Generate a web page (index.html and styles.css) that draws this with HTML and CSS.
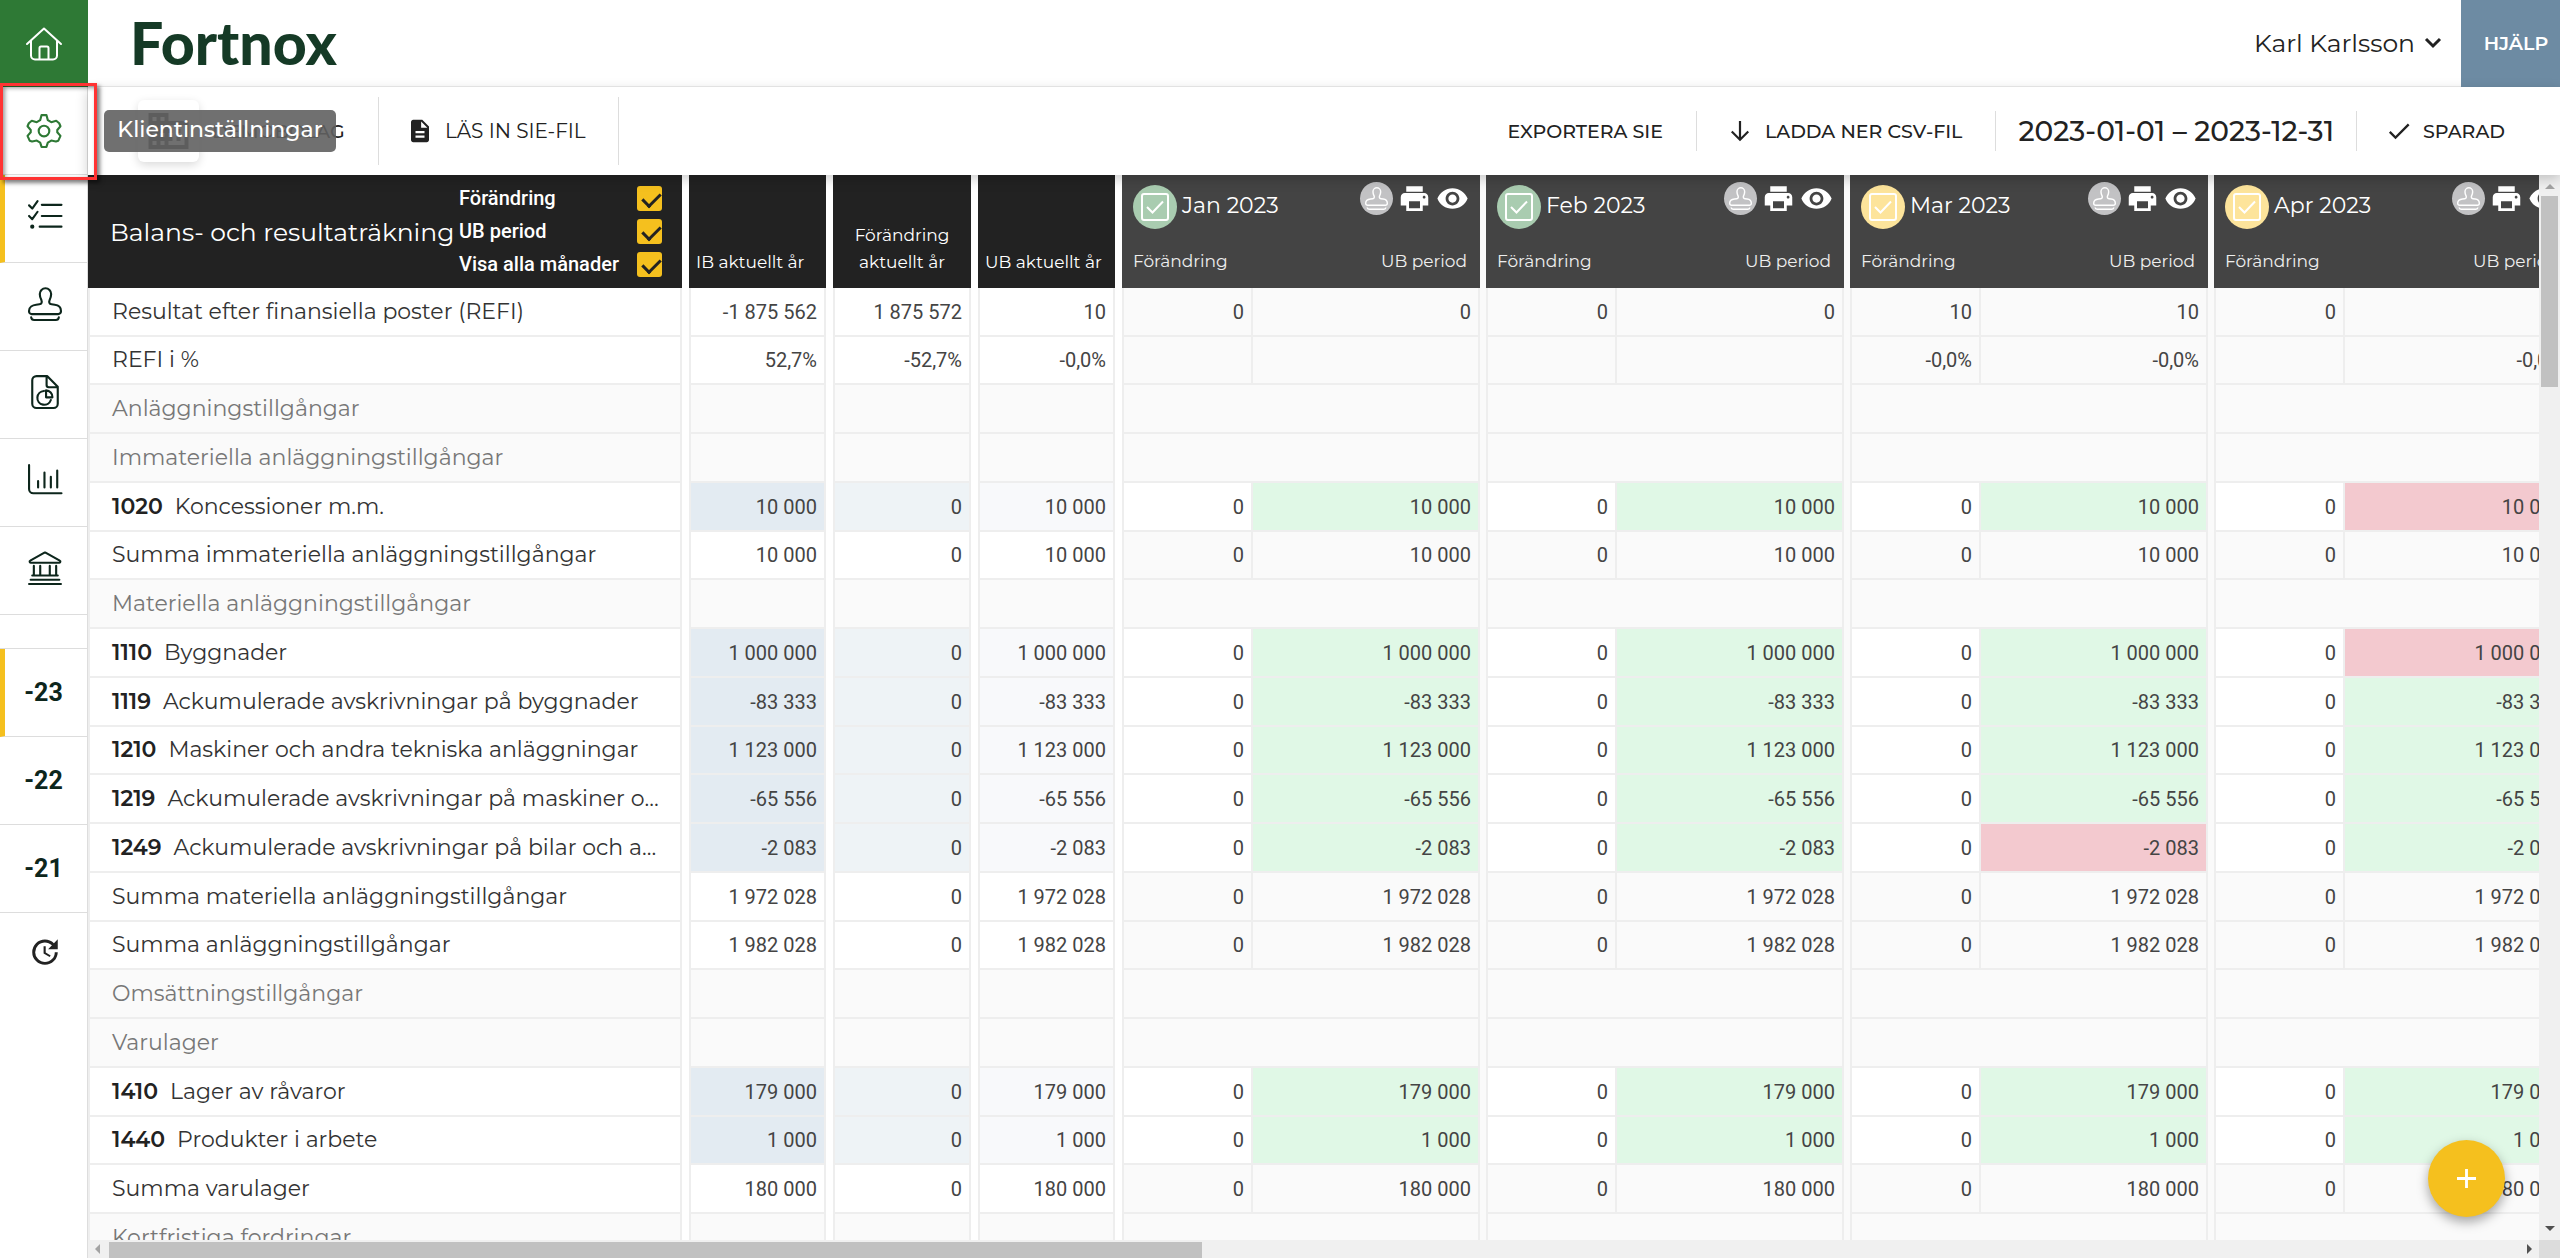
FILE: index.html
```html
<!DOCTYPE html>
<html lang="sv">
<head>
<meta charset="utf-8">
<title>Fortnox – Balans- och resultaträkning</title>
<link rel="stylesheet" href="styles.css">
</head>
<body>
<svg class="sprite" aria-hidden="true">
  <symbol id="i-stamp" viewBox="0 0 32 32">
    <path d="M3.500 25.500h25a2.500 2.500 0 0 0 2.500-2.500v-.6c0-3.200-2.400-5.300-5.800-5.700l-3-.4c-2.200-.3-2.700-2-1.900-4 .7-1.600 1.500-3.300 1.500-5.800a5.300 5.300 0 0 0-10.700 0c0 2.500.7 4.200 1.500 5.800.8 2 .3 3.700-1.900 4l-3 .4C4.200 17.100 1 19.200 1 22.400v.6a2.500 2.500 0 0 0 2.500 2.500z"/>
    <path d="M3 28.500c.2 1.700 1.200 2.500 2.800 2.500h20.400c1.600 0 2.600-.8 2.800-2.500"/>
  </symbol>
  <symbol id="i-check" viewBox="0 0 24 24"><path d="M9 16.200 4.800 12l-1.400 1.400L9 19 21 7l-1.400-1.400z"/></symbol>
  <symbol id="i-print" viewBox="0 0 24 24"><path d="M19 8H5c-1.700 0-3 1.300-3 3v6h4v4h12v-4h4v-6c0-1.700-1.300-3-3-3zm-3 11H8v-5h8v5zm3-7c-.6 0-1-.4-1-1s.4-1 1-1 1 .4 1 1-.4 1-1 1zm-1-9H6v4h12V3z"/></symbol>
  <symbol id="i-eye" viewBox="0 0 24 24"><path d="M12 4.500C7 4.500 2.700 7.600 1 12c1.700 4.400 6 7.500 11 7.500s9.300-3.100 11-7.500c-1.700-4.400-6-7.500-11-7.500zM12 17c-2.800 0-5-2.200-5-5s2.200-5 5-5 5 2.200 5 5-2.200 5-5 5zm0-8c-1.700 0-3 1.300-3 3s1.300 3 3 3 3-1.300 3-3-1.300-3-3-3z"/></symbol>
</svg>

<nav class="sidebar" aria-label="Huvudmeny">
  <a class="side-item side-home" href="#" aria-label="Hem">
    <svg class="line-icon home-icon" viewBox="0 0 36 34"><path d="M1 17 18 1.500 35 17M5 14v14.500a4 4 0 0 0 4 4h18a4 4 0 0 0 4-4V14M13.500 32V21a1.500 1.500 0 0 1 1.500-1.500h6a1.500 1.500 0 0 1 1.500 1.500v11"/></svg>
  </a>
  <a class="side-item side-settings" href="#" aria-label="Klientinställningar">
    <svg class="line-icon" viewBox="0 0 32 32"><circle cx="16" cy="16" r="5"/><path d="M13.700 1h4.600l1.300 4.800 3.200 1.900 4.700-1.400 2.800 2.400 1.200 2.800-3 3.500v2.200l3 3.400-2 4.500-2.300.8-4.400-.9-3.200 1.900-1.300 4.100h-4.600l-1.300-4.100-3.200-1.900-4.400.9-2.300-.8-2-4.500 3-3.400V15l-3-3.500L1.700 8.700l2.800-2.400 4.700 1.400 3.200-1.900z"/></svg>
  </a>
  <a class="side-item side-active" href="#" aria-label="Avstämning">
    <svg class="line-icon" viewBox="0 0 32 32"><path d="m1 6 3 3 5-7M13 5.500h18.500M1 16l3 3 5-7M13 16h18.500M11 26h20.500"/><circle cx="4" cy="26" r="1"/></svg>
  </a>
  <a class="side-item" href="#" aria-label="Signering"><svg class="line-icon"><use href="#i-stamp"/></svg></a>
  <a class="side-item" href="#" aria-label="Rapporter">
    <svg class="line-icon" viewBox="0 0 32 32"><path d="M18 1H8a4 4 0 0 0-4 4v22a4 4 0 0 0 4 4h16a4 4 0 0 0 4-4V11zM17.500 1.500V9.500a2 2 0 0 0 2 2H28M15 15a6.500 6.500 0 1 0 6.500 8.500M17 14.500v6.500h6a6.200 6.200 0 0 0-6-6.500z"/></svg>
  </a>
  <a class="side-item" href="#" aria-label="Analys">
    <svg class="line-icon" viewBox="0 0 32 32"><path d="M1 2v22.500a4 4 0 0 0 4 4h26.500M9.500 17v6M15.500 9v14M21.500 13v10M27.500 7v16"/></svg>
  </a>
  <a class="side-item" href="#" aria-label="Bank">
    <svg class="line-icon" viewBox="0 0 32 32"><path d="M2.500 11h27a1 1 0 0 0 .4-1.900L16.500 1.500h-1L2.100 9.100A1 1 0 0 0 2.500 11zM5.500 14v9M11.500 14v9M20.500 14v9M26.500 14v9M4 23h24M2.500 27h27M1 31h30"/></svg>
  </a>
  <div class="side-gap"></div>
  <a class="side-item side-year side-active" href="#">-23</a>
  <a class="side-item side-year" href="#">-22</a>
  <a class="side-item side-year" href="#">-21</a>
  <a class="side-item side-history" href="#" aria-label="Historik">
    <svg class="fill-icon" viewBox="0 0 24 24"><path d="M21 10.100h-6.800l2.700-2.800c-2.700-2.700-7.100-2.800-9.800-.1a6.900 6.900 0 0 0 0 9.800c2.700 2.700 7.100 2.700 9.800 0 1.400-1.300 2-3 2-4.900H21c0 2-.9 4.600-2.700 6.300a9 9 0 0 1-12.700 0 8.900 8.900 0 0 1 0-12.600 9 9 0 0 1 12.700 0L21 3v7.100zM12.500 8v4.300l3.500 2.100-.7 1.200L11 13V8h1.500z"/></svg>
  </a>
</nav>

<div class="main">
  <header class="topbar">
    <a class="logo" href="#">Fortnox</a>
    <button class="user" type="button">Karl Karlsson
      <svg class="chevron" viewBox="0 0 18 12"><path d="m2 2 7 7 7-7"/></svg>
    </button>
    <button class="help" type="button">HJÄLP</button>
  </header>

  <div class="toolbar">
    <button class="tool tool-company" type="button">
      <span class="company-chip"><svg class="company-icon" viewBox="0 0 20 18"><path d="M10 4V0H0v18h20V4H10zM4 16H2v-2h2v2zm0-4H2v-2h2v2zm0-4H2V6h2v2zm0-4H2V2h2v2zm4 12H6v-2h2v2zm0-4H6v-2h2v2zm0-4H6V6h2v2zm0-4H6V2h2v2zm10 12h-8v-2h2v-2h-2v-2h2V8h-2V6h8v10zm-2-8h-2v2h2V8zm0 4h-2v2h2v-2z"/></svg></span>
      DEMOBOLAG
    </button>
    <button class="tool tool-sie" type="button">
      <svg class="file-icon" viewBox="0 0 16 20"><path d="M10 0H2C.9 0 0 .9 0 2v16c0 1.100.9 2 2 2h12c1.100 0 2-.9 2-2V6l-6-6zm2 16H4v-2h8v2zm0-4H4v-2h8v2zM9 7V1.500L14.500 7H9z"/></svg>
      LÄS IN SIE-FIL
    </button>
    <div class="tools-right">
      <button class="tool-right" type="button">EXPORTERA SIE</button>
      <button class="tool-right" type="button">
        <svg class="arrow-icon" viewBox="0 0 18 20"><path d="M9 1v17M1.500 10.500 9 18l7.500-7.500"/></svg>
        LADDA NER CSV-FIL
      </button>
      <button class="tool-right tool-date" type="button">2023-01-01 – 2023-12-31</button>
      <span class="tool-right tool-saved"><svg class="saved-icon"><use href="#i-check"/></svg>SPARAD</span>
    </div>
  </div>

  <main class="viewport">
    <div class="sheet" id="sheet">
      <table class="grid grid-label">
        <thead><tr><th>
          <div class="title-head">
            <span class="title">Balans- och resultaträkning</span>
            <span class="options">
              <label class="option">Förändring<input type="checkbox" checked></label>
              <label class="option">UB period<input type="checkbox" checked></label>
              <label class="option">Visa alla månader<input type="checkbox" checked></label>
            </span>
          </div>
        </th></tr></thead>
        <tbody id="labels"></tbody>
      </table>
      <table class="grid grid-total">
        <thead><tr><th>IB aktuellt år</th></tr></thead>
        <tbody id="opening"></tbody>
      </table>
      <table class="grid grid-total grid-change">
        <thead><tr><th>Förändring aktuellt år</th></tr></thead>
        <tbody id="change"></tbody>
      </table>
      <table class="grid grid-total">
        <thead><tr><th>UB aktuellt år</th></tr></thead>
        <tbody id="closing"></tbody>
      </table>
      <div class="months" id="months"></div>
    </div>
    <div class="bar bar-y"><i class="tri tri-up"></i><span class="thumb thumb-y"></span><i class="tri tri-down"></i></div>
    <div class="bar bar-x"><i class="tri tri-left"></i><span class="thumb thumb-x"></span><i class="tri tri-right"></i></div>
    <div class="bar-corner"></div>
  </main>
</div>

<div class="marker"></div>
<div class="tooltip" role="tooltip">Klientinställningar</div>
<button class="fab" type="button" aria-label="Lägg till"><svg viewBox="0 0 20 20"><path d="M10 0v20M0 10h20"/></svg></button>
<script src="app.js"></script>
</body>
</html>
```
FILE: app.js
```js
// kind: s = section heading, t = total, a = account
const rows = [
  { kind: 't', name: 'Resultat efter finansiella poster (REFI)', ib: '-1 875 562', diff: '1 875 572', ub: '10',
    months: [['0', '0'], ['0', '0'], ['10', '10'], ['0', '10']] },
  { kind: 't', name: 'REFI i %', ib: '52,7%', diff: '-52,7%', ub: '-0,0%',
    months: [['', ''], ['', ''], ['-0,0%', '-0,0%'], ['', '-0,0%']] },
  { kind: 's', name: 'Anläggningstillgångar' },
  { kind: 's', name: 'Immateriella anläggningstillgångar' },
  { kind: 'a', no: '1020', name: 'Koncessioner m.m.', value: '10 000', off: [3] },
  { kind: 't', name: 'Summa immateriella anläggningstillgångar', value: '10 000' },
  { kind: 's', name: 'Materiella anläggningstillgångar' },
  { kind: 'a', no: '1110', name: 'Byggnader', value: '1 000 000', off: [3] },
  { kind: 'a', no: '1119', name: 'Ackumulerade avskrivningar på byggnader', value: '-83 333' },
  { kind: 'a', no: '1210', name: 'Maskiner och andra tekniska anläggningar', value: '1 123 000' },
  { kind: 'a', no: '1219', name: 'Ackumulerade avskrivningar på maskiner och andra tekniska anläggningar', value: '-65 556' },
  { kind: 'a', no: '1249', name: 'Ackumulerade avskrivningar på bilar och andra transportmedel', value: '-2 083', off: [2] },
  { kind: 't', name: 'Summa materiella anläggningstillgångar', value: '1 972 028' },
  { kind: 't', name: 'Summa anläggningstillgångar', value: '1 982 028' },
  { kind: 's', name: 'Omsättningstillgångar' },
  { kind: 's', name: 'Varulager' },
  { kind: 'a', no: '1410', name: 'Lager av råvaror', value: '179 000' },
  { kind: 'a', no: '1440', name: 'Produkter i arbete', value: '1 000' },
  { kind: 't', name: 'Summa varulager', value: '180 000' },
  { kind: 's', name: 'Kortfristiga fordringar' }
];
const months = [['Jan 2023', 'done'], ['Feb 2023', 'done'], ['Mar 2023', 'open'], ['Apr 2023', 'open']];

const fill = (id, cell) => {
  document.getElementById(id).innerHTML =
    rows.map(r => `<tr class="row-${r.kind}">${cell(r)}</tr>`).join('');
};
const text = (r, key) => r.kind === 's' ? '' : r[key] !== undefined ? r[key] : r.value;

fill('labels', r => `<td class="name">${r.no ? `<b class="no">${r.no}</b>` : ''}${r.name}</td>`);
fill('opening', r => `<td class="num c-ib">${text(r, 'ib')}</td>`);
fill('change', r => `<td class="num c-diff">${r.kind === 's' ? '' : r.diff || '0'}</td>`);
fill('closing', r => `<td class="num c-ub">${text(r, 'ub')}</td>`);

const monthRow = (r, m) => {
  if (r.kind === 's') return '<tr class="row-s"><td colspan="2"></td></tr>';
  const [diff, ub] = r.months ? r.months[m] : ['0', r.value];
  const state = r.kind === 'a' ? (r.off && r.off.includes(m) ? 'bad' : 'good') : '';
  return `<tr class="row-${r.kind}"><td class="num">${diff}</td><td class="num ${state}">${ub}</td></tr>`;
};

document.getElementById('months').innerHTML = months.map(([name, state], m) => `
  <table class="grid grid-month">
    <colgroup><col class="col-diff"><col></colgroup>
    <thead><tr><th colspan="2"><div class="month-head">
      <div class="month-top">
        <span class="status status-${state}"><svg viewBox="0 0 28 28"><rect x="1" y="1" width="26" height="26" rx="2"/><path d="m6 14 5.500 5.500L22 8.500"/></svg></span>
        <span class="month-name">${name}</span>
        <button class="stamp" type="button" aria-label="Signera"><svg><use href="#i-stamp"/></svg></button>
        <button class="act" type="button" aria-label="Skriv ut"><svg><use href="#i-print"/></svg></button>
        <button class="act" type="button" aria-label="Visa"><svg><use href="#i-eye"/></svg></button>
      </div>
      <div class="month-sub"><span>Förändring</span><span>UB period</span></div>
    </div></th></tr></thead>
    <tbody>${rows.map(r => monthRow(r, m)).join('')}</tbody>
  </table>`).join('');
```
FILE: styles.css
```css
* { box-sizing: border-box; }
body {
  margin: 0;
  height: 100vh;
  display: grid;
  grid-template-columns: 88px minmax(0, 1fr);
  overflow: hidden;
  background: #fff;
  color: #222;
  font-family: Montserrat, Inter, sans-serif;
  font-size: 19px;
  font-weight: 500;
}
a { color: inherit; text-decoration: none; }
button { margin: 0; padding: 0; border: 0; background: none; color: inherit; font: inherit; white-space: nowrap; }
.sprite { position: absolute; width: 0; height: 0; }

/* Sidebar */
.sidebar { border-right: 1px solid #ddd; display: flex; flex-direction: column; color: #0d261c; }
.side-item {
  height: 88px;
  flex: none;
  display: flex;
  align-items: center;
  justify-content: center;
  padding: 0 0 6px 3px;
  border-bottom: 1px solid #ddd;
}
.side-home { height: 87px; padding: 1px 0 0; margin-right: -1px; background: #2e7935; border: 0; color: #fff; }
.side-settings { padding: 0; color: #2e7935; }
.side-active { border-left: 5px solid #f5c01e; padding-left: 0; padding-right: 2px; }
.side-gap { height: 34px; flex: none; border-bottom: 1px solid #ddd; }
.side-year { padding: 0; font: 700 25px Roboto, sans-serif; }
.side-year.side-active { padding-right: 5px; }
.side-history { border: 0; padding: 0 0 10px 2px; color: #222; }
.line-icon { width: 34px; height: 34px; fill: none; stroke: currentColor; stroke-width: 2; stroke-linecap: round; stroke-linejoin: round; overflow: visible; }
.home-icon { width: 36px; }
.fill-icon { width: 34px; height: 34px; fill: currentColor; }

/* Top bar */
.main { display: flex; flex-direction: column; min-width: 0; min-height: 0; }
.topbar { height: 87px; flex: none; display: flex; align-items: stretch; border-bottom: 1px solid #eee; }
.logo { margin: 0 auto 0 42px; align-self: center; color: #153a26; font: 900 59px/60px Lato, sans-serif; }
.user { display: flex; align-items: center; gap: 9px; margin-right: 19px; font-size: 25px; font-weight: 400; }
.chevron { width: 18px; height: 12px; fill: none; stroke: #222; stroke-width: 3; }
.help { width: 99px; padding-left: 11px; margin-bottom: -1px; background: #6d8ba3; color: #fff; font-weight: 600; }

/* Toolbar */
.toolbar {
  height: 88px;
  flex: none;
  display: flex;
  align-items: center;
  position: relative;
  z-index: 1;
  background: #fff;
  box-shadow: 0 4px 12px rgba(0, 0, 0, .2);
}
.tool { height: 68px; display: flex; align-items: center; border-right: 1px solid #ddd; }
.tool-company { width: 291px; padding-left: 50px; gap: 13px; }
.company-chip { width: 61px; height: 62px; display: grid; place-items: center; border-radius: 6px; box-shadow: 0 3px 10px rgba(0, 0, 0, .15); }
.company-icon { width: 41px; height: 36px; fill: #444; }
.tool-sie { width: 240px; padding-left: 32px; gap: 16px; font-size: 20px; font-weight: 400; }
.file-icon { width: 18px; height: 24px; fill: #222; }
.tools-right { margin-left: auto; display: flex; align-items: center; padding-right: 55px; }
.tool-right { height: 40px; display: flex; align-items: center; gap: 15px; padding-left: 33px; padding-right: 33px; border-right: 1px solid #ddd; white-space: nowrap; }
.tool-date { padding: 0 22px; font-size: 28px; }
.tool-saved { border: 0; padding: 0 0 0 28px; gap: 10px; }
.arrow-icon { width: 20px; height: 22px; fill: none; stroke: #222; stroke-width: 2; }
.saved-icon { width: 28px; height: 28px; fill: #222; }

/* Spreadsheet */
.viewport { flex: 1; min-height: 0; display: grid; grid-template: minmax(0, 1fr) 18px / minmax(0, 1fr) 21px; }
.sheet { overflow: hidden; display: flex; align-items: flex-start; gap: 7px; }
.months { display: flex; gap: 6px; background: #fafafa; }
.grid { flex: none; table-layout: fixed; border-collapse: separate; border-spacing: 0; }
.grid-label { width: 594px; }
.grid-total { width: 137px; }
.grid-change { width: 138px; }
.grid-month { width: 358px; }
.col-diff { width: 131px; }
.grid th { height: 113px; padding: 0; background: #222; color: #fff; font-weight: 400; }
.grid-total th { padding: 0 7px 12px; vertical-align: bottom; text-align: left; font-size: 17px; line-height: 27px; white-space: nowrap; }
.grid-change th { text-align: center; white-space: normal; }
.grid tbody tr { height: 49px; }
.grid tbody tr:nth-child(4n+2) { height: 48px; }
.grid td { padding: 0 7px; border: solid #eee; border-width: 0 2px 2px 0; overflow: hidden; white-space: nowrap; line-height: 24px; }
.grid td:first-child { border-left-width: 2px; }
.row-s td, .grid-month td { background: #fafafa; }
.grid td.name { padding: 0 11px 0 22px; text-overflow: ellipsis; color: #333; font-size: 22px; font-weight: 400; }
.grid .row-s td.name { color: #777; }
.no { margin-right: 12px; color: #222; font-weight: 600; }
.num { text-align: right; color: #444; font: 400 20px Roboto, sans-serif; }
.row-a .c-ib { background: #e3ebf2; }
.row-a .c-diff { background: #eef3f6; }
.row-a .c-ub { background: #f8f9fb; }
.grid-month .row-a td { background: #fff; }
.grid-month .row-a .good { background: #e0f8e6; }
.grid-month .row-a .bad { background: #f3c9cf; }

.title-head { height: 113px; display: flex; align-items: center; padding: 0 20px 0 22px; }
.title { width: 349px; font-size: 25px; text-align: left; white-space: nowrap; }
.options { flex: 1; display: grid; gap: 8px; font: 500 20px/25px Roboto, sans-serif; }
.option { display: flex; justify-content: space-between; }
.option input { appearance: none; position: relative; width: 25px; height: 25px; margin: 0; border-radius: 3px; background: #f5c01e; }
.option input::after {
  content: "";
  position: absolute;
  left: 9px;
  top: 3px;
  width: 8px;
  height: 15px;
  border: solid #222;
  border-width: 0 3px 3px 0;
  transform: rotate(45deg);
}

.grid-month th { background: #444; }
.month-head { height: 113px; padding: 7px 13px 15px 11px; display: flex; flex-direction: column; justify-content: space-between; background: #444; }
.month-top { display: flex; align-items: flex-start; gap: 5px; }
.status { width: 44px; height: 44px; margin-top: 3px; display: grid; place-items: center; border-radius: 50%; }
.status-done { background: #a9ccb0; }
.status-open { background: #fde49b; }
.status svg { width: 28px; height: 28px; fill: none; stroke: #fff; stroke-width: 2; }
.month-name { margin-right: auto; font-size: 22px; line-height: 48px; }
.stamp { width: 33px; height: 33px; display: grid; place-items: center; border-radius: 50%; background: #c2c2c4; }
.stamp svg { width: 23px; height: 23px; fill: none; stroke: #fff; stroke-width: 2; }
.act { width: 33px; height: 33px; display: grid; place-items: center; }
.act + .act { margin-right: -2px; }
.act svg { width: 33px; height: 33px; fill: #fff; }
.month-sub { display: flex; justify-content: space-between; font-size: 17px; line-height: 24px; color: #eee; }

/* Scroll bars */
.bar { background: #f0f0f0; display: flex; align-items: center; }
.bar-y { flex-direction: column; padding: 9px 0; }
.bar-x { grid-row: 2; grid-column: 1; padding: 0 7px; }
.bar-corner { background: #dcdcdc; }
.thumb { background: #c1c1c1; }
.thumb-y { width: 17px; height: 191px; margin-top: 7px; }
.thumb-x { width: 1093px; height: 16px; margin: 2px 0 0 9px; }
.tri { width: 0; height: 0; border: 5px solid transparent; flex: none; }
.tri-up { border-top: 0; border-bottom-color: #a3a3a3; }
.tri-down { margin-top: auto; border-bottom: 0; border-top-color: #505050; }
.tri-left { border-left: 0; border-right-color: #a3a3a3; }
.tri-right { margin-left: auto; border-right: 0; border-left-color: #505050; }

/* Overlays */
.marker { position: absolute; z-index: 2; left: 0; top: 83px; width: 97px; height: 97px; border: 3px solid #f33; box-shadow: 3px 3px 4px rgba(0, 0, 0, .5), inset 2px 2px 4px rgba(0, 0, 0, .4); pointer-events: none; }
.tooltip { position: absolute; z-index: 3; left: 104px; top: 110px; width: 232px; height: 42px; border-radius: 5px; background: rgba(97, 97, 97, .9); color: #fff; font-size: 22px; line-height: 40px; text-align: center; }
.fab { position: absolute; z-index: 2; right: 55px; bottom: 41px; width: 77px; height: 77px; display: grid; place-items: center; border-radius: 50%; background: #f5c01e; box-shadow: 0 5px 12px rgba(0, 0, 0, .35); }
.fab svg { width: 19px; height: 19px; stroke: #fff; stroke-width: 3; }
```
